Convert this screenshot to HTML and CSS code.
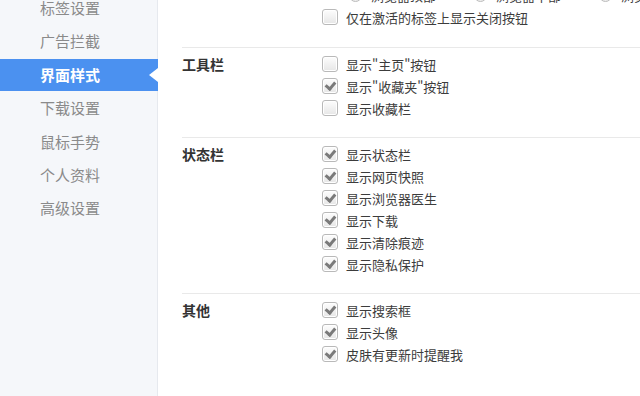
FILE: index.html
```html
<!DOCTYPE html>
<html lang="zh-CN">
<head>
    <meta charset="UTF-8">
    <title>界面样式</title>
    <link rel="stylesheet" href="styles.css">
</head>
<body>
    <div class="page">
        <ul class="sidebar">
            <li>标签设置</li>
            <li>广告拦截</li>
            <li class="active">界面样式</li>
            <li>下载设置</li>
            <li>鼠标手势</li>
            <li>个人资料</li>
            <li>高级设置</li>
        </ul>

        <div class="main">
            <div class="section first">
                <div class="title"></div>
                <div class="options">
                    <div class="radios">
                        <label class="radio"><span class="dot"></span>浏览器顶部</label>
                        <label class="radio"><span class="dot"></span>浏览器中部</label>
                        <label class="radio"><span class="dot"></span>浏览器底部</label>
                    </div>
                    <label class="row"><span class="box"></span>仅在激活的标签上显示关闭按钮</label>
                </div>
            </div>

            <div class="section">
                <div class="title">工具栏</div>
                <div class="options">
                    <label class="row"><span class="box"></span>显示"主页"按钮</label>
                    <label class="row"><span class="box checked"></span>显示"收藏夹"按钮</label>
                    <label class="row"><span class="box"></span>显示收藏栏</label>
                </div>
            </div>

            <div class="section">
                <div class="title">状态栏</div>
                <div class="options">
                    <label class="row"><span class="box checked"></span>显示状态栏</label>
                    <label class="row"><span class="box checked"></span>显示网页快照</label>
                    <label class="row"><span class="box checked"></span>显示浏览器医生</label>
                    <label class="row"><span class="box checked"></span>显示下载</label>
                    <label class="row"><span class="box checked"></span>显示清除痕迹</label>
                    <label class="row"><span class="box checked"></span>显示隐私保护</label>
                </div>
            </div>

            <div class="section last">
                <div class="title">其他</div>
                <div class="options">
                    <label class="row"><span class="box checked"></span>显示搜索框</label>
                    <label class="row"><span class="box checked"></span>显示头像</label>
                    <label class="row"><span class="box checked"></span>皮肤有更新时提醒我</label>
                </div>
            </div>
        </div>
    </div>
</body>
</html>
```

FILE: styles.css
```css
html, body {
    margin: 0;
    height: 100%;
    overflow: hidden;
}

body {
    font-family: "Noto Sans CJK SC", "Liberation Sans", sans-serif;
    background: #fff;
    color: #444;
}

.page {
    display: flex;
    height: 396px;
}

/* Seitenleiste */
.sidebar {
    list-style: none;
    margin: 0;
    padding: 0;
    width: 157px;
    flex-shrink: 0;
    background: #f5f7fa;
    border-right: 1px solid #e6e9ee;
    margin-top: -8px;
    height: 404px;
}

.sidebar li {
    position: relative;
    height: 32px;
    line-height: 31px;
    margin-bottom: 1.4px;
    padding-left: 40px;
    font-size: 15px;
    color: #8a8a8a;
}

.sidebar li.active {
    background: #4b91f0;
    color: #fff;
    font-weight: bold;
    margin-right: -1px;
}

.sidebar li.active::after {
    content: "";
    position: absolute;
    right: 0;
    top: 9px;
    border-style: solid;
    border-width: 7px 9px 7px 0;
    border-color: transparent #fff transparent transparent;
}

/* Inhalt */
.main {
    flex: 1;
    padding-left: 24px;
    margin-top: -21px;
}

.section {
    display: flex;
    padding: 5px 0 18px;
    border-bottom: 1px solid #e9e9e9;
}

.section.first {
    padding-bottom: 19px;
}

.section.last {
    border-bottom: none;
}

.title {
    width: 141px;
    flex-shrink: 0;
    font-size: 14px;
    font-weight: bold;
    color: #333;
    line-height: 22px;
}

.options {
    display: flex;
    flex-direction: column;
}

.row, .radio {
    display: flex;
    align-items: center;
    height: 22px;
    font-size: 13px;
    color: #3c3c3c;
    white-space: nowrap;
}

.radios {
    display: flex;
    padding-left: 26px;
}

.radio {
    width: 125px;
}

.dot {
    width: 11px;
    height: 11px;
    border: 1px solid #bbb;
    border-radius: 50%;
    background: linear-gradient(#fff, #ececec);
    margin-right: 9px;
}

.box {
    width: 14px;
    height: 14px;
    border: 1px solid #b9b9b9;
    border-radius: 3px;
    background: linear-gradient(#fdfdfd, #e6e6e6);
    margin-right: 8px;
    margin-left: -1px;
    box-shadow: inset 0 0 0 1px #fff;
    position: relative;
}

.box.checked::after {
    content: "";
    position: absolute;
    left: 4px;
    top: 1px;
    width: 4px;
    height: 7px;
    border: solid #7a7a7a;
    border-width: 0 3px 3px 0;
    transform: rotate(40deg);
}
```
